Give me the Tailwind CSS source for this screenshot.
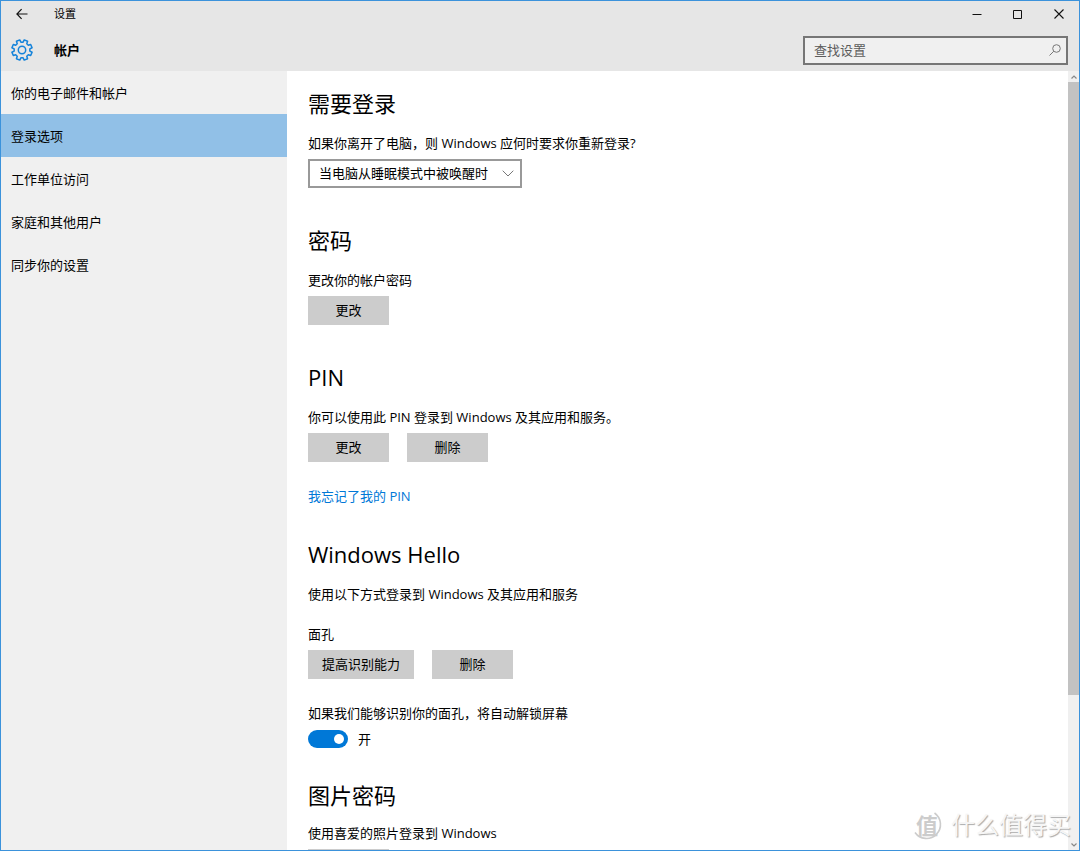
<!DOCTYPE html>
<html lang="zh-CN">
<head>
<meta charset="utf-8">
<meta name="viewport" content="width=device-width, initial-scale=1">
<title>设置</title>
<script src="https://cdn.jsdelivr.net/npm/@tailwindcss/browser@4"></script>
</head>
<body class="font-['Open_Sans','Noto_Sans_CJK_SC',sans-serif] text-[13px] leading-5 text-black">
<div class="relative flex h-screen flex-col overflow-hidden border border-[#3b92db] bg-white">

  <header class="shrink-0 bg-[#e6e6e6]">
    <div class="flex h-[26px] items-center">
      <button type="button" aria-label="返回" class="flex h-full w-[42px] items-center justify-center">
        <svg class="size-3" viewBox="0 0 12 12" fill="none" stroke="#111" stroke-width="1.2"><path d="M11.5 6H1M5.6 1.2 .9 6l4.7 4.8"/></svg>
      </button>
      <span class="ml-[11px] text-[11px]">设置</span>
      <div class="ml-auto flex h-full">
        <button type="button" aria-label="最小化" class="flex w-[41px] items-center justify-center"><svg class="size-[10px]" viewBox="0 0 10 10" stroke="#111"><path d="M.5 5.5h9"/></svg></button>
        <button type="button" aria-label="最大化" class="flex w-[41px] items-center justify-center"><svg class="size-[10px]" viewBox="0 0 10 10" fill="none" stroke="#111"><path d="M.5 1.5h8v8h-8z"/></svg></button>
        <button type="button" aria-label="关闭" class="flex w-[41px] items-center justify-center"><svg class="size-[10px]" viewBox="0 0 10 10" fill="none" stroke="#111" stroke-width="1.1"><path d="M.5 .5l9 9M9.500 .5l-9 9"/></svg></button>
      </div>
    </div>
    <div class="flex h-11 items-center pt-[2px] pr-[11px] pl-[10px]">
      <svg class="size-[22px]" viewBox="0 0 22 22" fill="none" stroke="#1583da" stroke-width="1.5" stroke-linejoin="round"><circle cx="11" cy="11" r="3.700"/><path d="M12.090 3.170 13.210 0.920 16.570 2.310 15.770 4.690 17.310 6.230 19.690 5.430 21.080 8.790 18.830 9.910 18.830 12.090 21.080 13.210 19.690 16.570 17.310 15.770 15.770 17.310 16.570 19.690 13.210 21.080 12.090 18.830 9.910 18.830 8.790 21.080 5.430 19.690 6.230 17.310 4.690 15.770 2.310 16.570 0.920 13.210 3.170 12.090 3.170 9.910 0.920 8.790 2.310 5.430 4.690 6.230 6.230 4.690 5.430 2.310 8.790 0.920 9.910 3.170z"/></svg>
      <h1 class="ml-[21px] text-[13px] font-bold">帐户</h1>
      <label class="ml-auto flex h-[29px] w-[265px] items-center border-2 border-[#767676] bg-[#f0f0f0] pr-[5px] pl-[9px]">
        <input type="text" aria-label="查找设置" placeholder="查找设置" class="min-w-0 flex-1 bg-transparent outline-none placeholder:text-[#5c5c5c]">
        <svg class="size-3" viewBox="0 0 12 12" fill="none" stroke="#777"><circle cx="7.500" cy="4.500" r="3.800"/><path d="M4.800 7.200 .5 11.500"/></svg>
      </label>
    </div>
  </header>

  <div class="flex min-h-0 flex-1">
    <nav class="w-[286px] shrink-0 bg-[#f0f0f0]">
      <a href="#" class="flex h-[43px] items-center px-[10px]">你的电子邮件和帐户</a>
      <a href="#" aria-current="page" class="flex h-[43px] items-center bg-[#91c0e7] px-[10px]">登录选项</a>
      <a href="#" class="flex h-[43px] items-center px-[10px]">工作单位访问</a>
      <a href="#" class="flex h-[43px] items-center px-[10px]">家庭和其他用户</a>
      <a href="#" class="flex h-[43px] items-center px-[10px]">同步你的设置</a>
    </nav>

    <main class="min-w-0 flex-1 overflow-hidden px-[21px] pt-[18px]">
      <section>
        <h2 class="mb-4 text-[22px] leading-7">需要登录</h2>
        <label for="relogin" class="block">如果你离开了电脑，则 Windows 应何时要求你重新登录?</label>
        <div class="relative mt-[6px] w-[214px]">
          <select id="relogin" class="h-[29px] w-full appearance-none border-2 border-[#999] bg-white pr-7 pb-[2px] pl-[9px]"><option>当电脑从睡眠模式中被唤醒时</option></select>
          <svg class="pointer-events-none absolute top-[11px] right-2 h-[7px] w-3" viewBox="0 0 12 7" fill="none" stroke="#777"><path d="M.7 .7 6 6 11.300 .7"/></svg>
        </div>
      </section>

      <section class="mt-[38px]">
        <h2 class="mb-4 text-[22px] leading-7">密码</h2>
        <p>更改你的帐户密码</p>
        <button type="button" class="mt-[6px] h-[29px] w-[81px] bg-[#ccc] pb-[2px]">更改</button>
      </section>

      <section class="mt-[38px]">
        <h2 class="mb-4 text-[22px] leading-7">PIN</h2>
        <p>你可以使用此 PIN 登录到 Windows 及其应用和服务。</p>
        <div class="mt-[6px] flex gap-[18px]">
          <button type="button" class="h-[29px] w-[81px] bg-[#ccc] pb-[2px]">更改</button>
          <button type="button" class="h-[29px] w-[81px] bg-[#ccc] pb-[2px]">删除</button>
        </div>
        <a href="#" class="mt-6 block w-fit text-[#0078d7]">我忘记了我的 PIN</a>
      </section>

      <section class="mt-[34px]">
        <h2 class="mb-4 text-[22px] leading-7">Windows Hello</h2>
        <p>使用以下方式登录到 Windows 及其应用和服务</p>
        <h3 class="mt-5">面孔</h3>
        <div class="mt-[6px] flex gap-[18px]">
          <button type="button" class="h-[29px] w-[106px] bg-[#ccc] pb-[2px]">提高识别能力</button>
          <button type="button" class="h-[29px] w-[81px] bg-[#ccc] pb-[2px]">删除</button>
        </div>
        <p id="unlock" class="mt-6">如果我们能够识别你的面孔，将自动解锁屏幕</p>
        <label class="mt-[6px] flex h-5 w-fit items-center gap-[10px]">
          <span class="relative flex">
            <input type="checkbox" role="switch" aria-describedby="unlock" checked class="h-[18px] w-10 appearance-none rounded-full bg-[#0078d7]">
            <span class="pointer-events-none absolute top-1 right-1 size-[10px] rounded-full bg-white"></span>
          </span>
          开
        </label>
      </section>

      <section class="mt-8">
        <h2 class="mb-[14px] text-[22px] leading-7">图片密码</h2>
        <p>使用喜爱的照片登录到 Windows</p>
        <button type="button" aria-label="添加图片密码" class="mt-[6px] h-[29px] w-[81px] bg-[#ccc]"></button>
      </section>
    </main>

    <div class="flex w-[11px] shrink-0 flex-col bg-[#f0f0f0]" aria-hidden="true">
      <div class="flex h-[11px] items-center justify-center"><svg class="h-1 w-[6px]" viewBox="0 0 6 4" fill="none" stroke="#888" stroke-width="1.200"><path d="M.5 3.500 3 1l2.500 2.500"/></svg></div>
      <div class="flex min-h-0 flex-1 flex-col">
        <div class="h-[81%] bg-[#c2c2c2]"></div>
      </div>
      <div class="flex h-[11px] items-center justify-center"><svg class="h-1 w-[6px]" viewBox="0 0 6 4" fill="none" stroke="#888" stroke-width="1.200"><path d="M.5 .5 3 3 5.500 .5"/></svg></div>
    </div>
  </div>

  <div class="pointer-events-none absolute right-2 bottom-[9px] flex items-center gap-2">
    <span class="relative flex size-8 items-center justify-center">
      <svg class="absolute inset-0 size-8" viewBox="0 0 32 32" fill="none" stroke="#ccc" stroke-width="1.600"><path d="M23.500 4A14 14 0 1 1 4 23.500"/></svg>
      <span class="text-[22px] leading-8 font-bold text-[#ccc]">值</span>
    </span>
    <span class="text-[24px] leading-8 text-[#f6f6f6] [text-shadow:1px_1px_1px_#aaa]">什么值得买</span>
  </div>
</div>
</body>
</html>
